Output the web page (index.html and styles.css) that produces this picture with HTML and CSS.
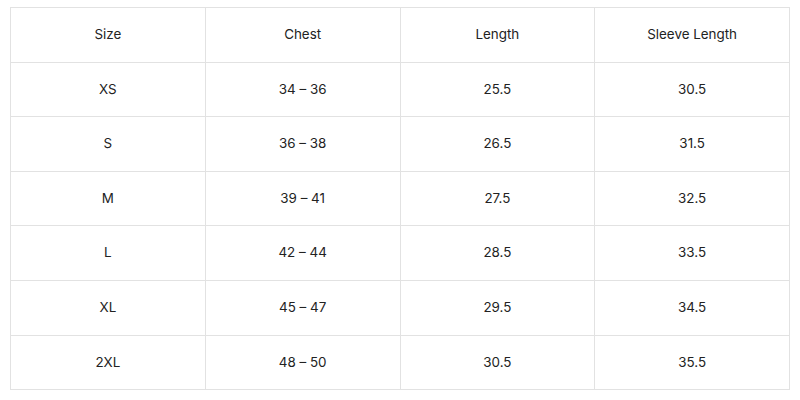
FILE: index.html
```html
<!DOCTYPE html>
<html>
<head>
<meta charset="utf-8">
<link rel="stylesheet" href="styles.css">
</head>
<body>
<table class="size-table">
  <tr><td>Size</td><td>Chest</td><td>Length</td><td>Sleeve Length</td></tr>
  <tr><td>XS</td><td>34 – 36</td><td>25.5</td><td>30.5</td></tr>
  <tr><td>S</td><td>36 – 38</td><td>26.5</td><td>31.5</td></tr>
  <tr><td>M</td><td>39 – 41</td><td>27.5</td><td>32.5</td></tr>
  <tr><td>L</td><td>42 – 44</td><td>28.5</td><td>33.5</td></tr>
  <tr><td>XL</td><td>45 – 47</td><td>29.5</td><td>34.5</td></tr>
  <tr><td>2XL</td><td>48 – 50</td><td>30.5</td><td>35.5</td></tr>
</table>
</body>
</html>
```
FILE: styles.css
```css
html, body {
  margin: 0;
  padding: 0;
  background: #ffffff;
}
body {
  padding: 7px 0 0 10px;
  font-family: "Inter", "Noto Sans", sans-serif;
  color: #222222;
}
.size-table {
  border-collapse: collapse;
  width: 780px;
  table-layout: fixed;
}
.size-table td {
  border: 1px solid #e2e2e2;
  height: 53.6px;
  padding: 0;
  text-align: center;
  vertical-align: middle;
  font-size: 13.4px;
  line-height: 1;
}
```
